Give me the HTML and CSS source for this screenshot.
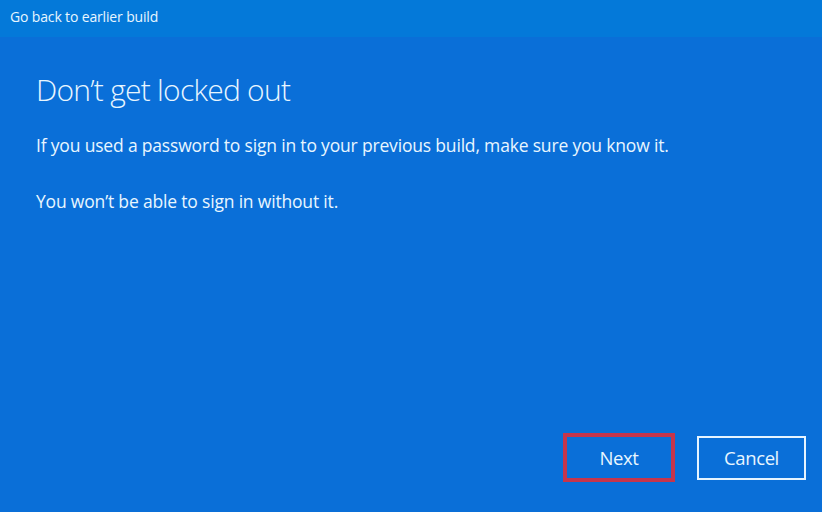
FILE: index.html
```html
<!DOCTYPE html>
<html>
<head>
<meta charset="utf-8">
<link rel="stylesheet" href="styles.css">
</head>
<body>
<div class="window">
  <div class="titlebar">Go back to earlier build</div>
  <div class="content">
    <h1 class="heading">Don’t get locked out</h1>
    <p class="text">If you used a password to sign in to your previous build, make sure you know it.</p>
    <p class="text">You won’t be able to sign in without it.</p>
    <div class="actions">
      <button class="btn btn-next">Next</button>
      <button class="btn btn-cancel">Cancel</button>
    </div>
  </div>
</div>
</body>
</html>
```
FILE: styles.css
```css
html, body {
  margin: 0;
  padding: 0;
  height: 100%;
}
body {
  font-family: "Open Sans", "Noto Sans", sans-serif;
  color: #e8f6ff;
  background: #0a6fd8;
}
.window {
  display: flex;
  flex-direction: column;
  height: 512px;
  width: 822px;
}
.titlebar {
  height: 37px;
  background: #0479d9;
  font-size: 14px;
  padding-left: 10px;
  line-height: 34px;
  letter-spacing: -0.15px;
}
.content {
  flex: 1;
  background: #0a6fd8;
  padding: 0 16px 30px 36px;
  display: flex;
  flex-direction: column;
}
.heading {
  margin: 33px 0 0 0;
  font-weight: 300;
  font-size: 30px;
  line-height: 40px;
  letter-spacing: -0.75px;
}
.text {
  margin: 23px 0 0 0;
  font-size: 17.5px;
  line-height: 24px;
  letter-spacing: -0.18px;
}
.text + .text {
  margin-top: 32px;
}
.actions {
  margin-top: auto;
  display: flex;
  justify-content: flex-end;
  gap: 22px;
  align-items: center;
}
.btn {
  font-family: inherit;
  color: #e8f6ff;
  font-size: 18.5px;
  background: transparent;
  letter-spacing: -0.4px;
}
.btn-next {
  width: 112px;
  height: 49px;
  border: 4px solid #c6354c;
}
.btn-cancel {
  width: 109px;
  height: 44px;
  border: 2px solid #e6f4ff;
}
```
